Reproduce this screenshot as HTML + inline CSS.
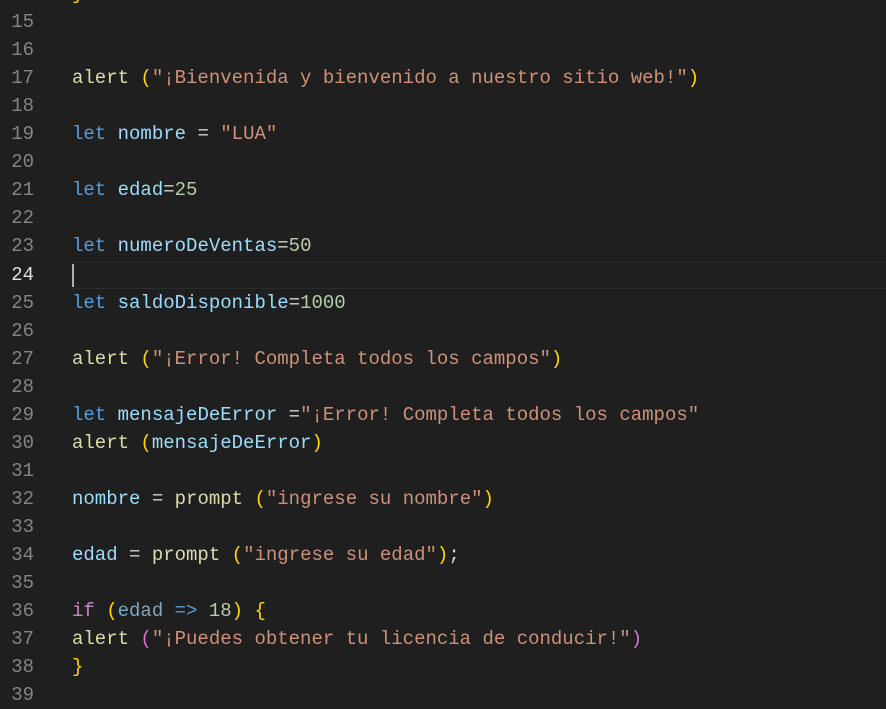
<!DOCTYPE html>
<html><head><meta charset="utf-8"><style>
body{margin:0;width:886px;height:709px;background:#1f1f1f;overflow:hidden;font-family:"Liberation Mono",monospace;font-size:19px;}
.l{position:absolute;left:0;height:28px;line-height:28px;white-space:pre;width:886px}
.n{position:absolute;right:852px;color:#858585;text-align:right}
.c{position:absolute;left:72px;color:#d4d4d4}
.f{color:#dcdcaa}.s{color:#ce9178}.k{color:#569cd6}.v{color:#9cdcfe}.d{color:#b5cea8}.i{color:#c586c0}
.y{color:#ffd700}.p{color:#da70d6}.e{color:#7fa7c2}
.cur{position:absolute;left:70px;top:262px;width:816px;height:25px;border-top:1px solid #2c2c2c;border-bottom:1px solid #2c2c2c}
.caret{position:absolute;left:72px;top:264px;width:2px;height:23px;background:#aeafad}
</style></head><body>
<div class="cur"></div><div class="caret"></div>
<div class="l" style="top:-20px"><span class="n">14</span><span class="c"><span class="y">}</span></span></div>
<div class="l" style="top:8px"><span class="n">15</span></div>
<div class="l" style="top:36px"><span class="n">16</span></div>
<div class="l" style="top:64px"><span class="n">17</span><span class="c"><span class="f">alert</span> <span class="y">(</span><span class="s">"¡Bienvenida y bienvenido a nuestro sitio web!"</span><span class="y">)</span></span></div>
<div class="l" style="top:92px"><span class="n">18</span></div>
<div class="l" style="top:120px"><span class="n">19</span><span class="c"><span class="k">let</span> <span class="v">nombre</span> = <span class="s">"LUA"</span></span></div>
<div class="l" style="top:148px"><span class="n">20</span></div>
<div class="l" style="top:176px"><span class="n">21</span><span class="c"><span class="k">let</span> <span class="v">edad</span>=<span class="d">25</span></span></div>
<div class="l" style="top:204px"><span class="n">22</span></div>
<div class="l" style="top:232px"><span class="n">23</span><span class="c"><span class="k">let</span> <span class="v">numeroDeVentas</span>=<span class="d">50</span></span></div>
<div class="l" style="top:261px"><span class="n" style="color:#e0e0e0">24</span></div>
<div class="l" style="top:289px"><span class="n">25</span><span class="c"><span class="k">let</span> <span class="v">saldoDisponible</span>=<span class="d">1000</span></span></div>
<div class="l" style="top:317px"><span class="n">26</span></div>
<div class="l" style="top:345px"><span class="n">27</span><span class="c"><span class="f">alert</span> <span class="y">(</span><span class="s">"¡Error! Completa todos los campos"</span><span class="y">)</span></span></div>
<div class="l" style="top:373px"><span class="n">28</span></div>
<div class="l" style="top:401px"><span class="n">29</span><span class="c"><span class="k">let</span> <span class="v">mensajeDeError</span> =<span class="s">"¡Error! Completa todos los campos"</span></span></div>
<div class="l" style="top:429px"><span class="n">30</span><span class="c"><span class="f">alert</span> <span class="y">(</span><span class="v">mensajeDeError</span><span class="y">)</span></span></div>
<div class="l" style="top:457px"><span class="n">31</span></div>
<div class="l" style="top:485px"><span class="n">32</span><span class="c"><span class="v">nombre</span> = <span class="f">prompt</span> <span class="y">(</span><span class="s">"ingrese su nombre"</span><span class="y">)</span></span></div>
<div class="l" style="top:513px"><span class="n">33</span></div>
<div class="l" style="top:541px"><span class="n">34</span><span class="c"><span class="v">edad</span> = <span class="f">prompt</span> <span class="y">(</span><span class="s">"ingrese su edad"</span><span class="y">)</span>;</span></div>
<div class="l" style="top:569px"><span class="n">35</span></div>
<div class="l" style="top:597px"><span class="n">36</span><span class="c"><span class="i">if</span> <span class="y">(</span><span class="e">edad</span> <span class="k">=&gt;</span> <span class="d">18</span><span class="y">)</span> <span class="y">{</span></span></div>
<div class="l" style="top:625px"><span class="n">37</span><span class="c"><span class="f">alert</span> <span class="p">(</span><span class="s">"¡Puedes obtener tu licencia de conducir!"</span><span class="p">)</span></span></div>
<div class="l" style="top:653px"><span class="n">38</span><span class="c"><span class="y">}</span></span></div>
<div class="l" style="top:681px"><span class="n">39</span></div>
</body></html>
